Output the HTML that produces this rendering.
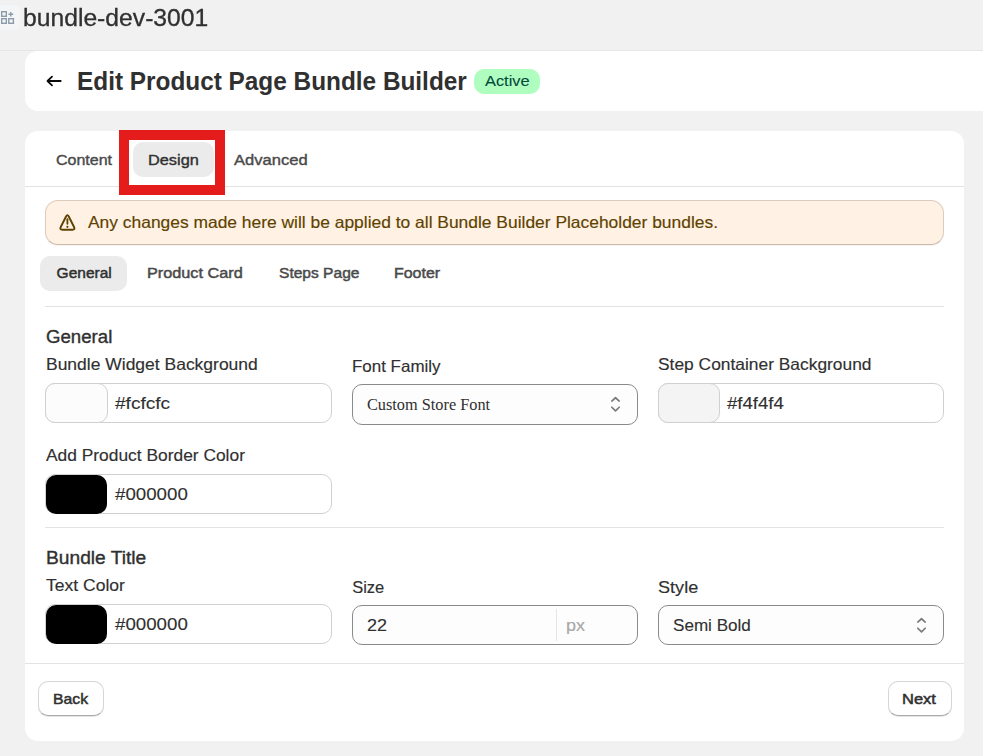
<!DOCTYPE html>
<html><head><meta charset="utf-8"><style>
html,body{margin:0;padding:0;}
body{width:983px;height:756px;overflow:hidden;background:#f1f1f1;position:relative;font-family:"Liberation Sans",sans-serif;}
.t{position:absolute;white-space:nowrap;transform-origin:0 0;}
.b{position:absolute;box-sizing:border-box;}
</style></head><body>
<div class="b" style="left:0;top:50px;width:983px;height:1px;background:#e6e6e6"></div>
<div class="b" style="left:-4px;top:5px;width:24px;height:25px;border-radius:5px;background:#f4f5f6"></div>
<svg class="b" style="left:0;top:10px" width="16" height="16" viewBox="0 0 16 16">
 <g fill="none" stroke="#8c9baa" stroke-width="1.4">
  <rect x="1.7" y="1.7" width="4.6" height="4.6"/>
  <rect x="1.7" y="8.7" width="4.6" height="4.6"/>
  <rect x="8.8" y="8.7" width="4.6" height="4.6"/>
  <path d="M8.4 4.2H13.2M10.8 1.9V6.6"/>
 </g>
</svg>
<!-- header card -->
<div class="b" style="left:25px;top:51px;width:980px;height:60px;border-radius:13px;background:#fff"></div>
<svg class="b" style="left:45px;top:74px" width="18" height="14" viewBox="0 0 18 14">
 <path d="M15.7 7H2.8M7 2.7L2.5 7L7 11.3" fill="none" stroke="#0a0a0a" stroke-width="1.8" stroke-linecap="round" stroke-linejoin="round"/>
</svg>
<div class="b" style="left:474px;top:69px;width:66px;height:25px;border-radius:10px;background:#affebf"></div>
<!-- content card -->
<div class="b" style="left:25px;top:131px;width:939px;height:610px;border-radius:13px;background:#fff"></div>
<div class="b" style="left:25px;top:186px;width:939px;height:1px;background:#e3e3e3"></div>
<div class="b" style="left:133px;top:142px;width:81px;height:35px;border-radius:10px;background:#ebebeb"></div>
<div class="b" style="left:119px;top:130px;width:106px;height:65px;border:10px solid #e41c1c"></div>
<!-- banner -->
<div class="b" style="left:45px;top:200px;width:899px;height:45px;border-radius:13px;background:#fff1e3;border:1px solid #ddccbd;border-bottom-color:#cdb9a7;box-shadow:0 1px 1px rgba(0,0,0,0.05)"></div>
<svg class="b" style="left:55px;top:210px" width="26" height="25" viewBox="0 0 26 25">
 <path d="M11.05 6.48L5.75 17.02Q4.4 19.7 7.4 19.7L17.4 19.7Q20.4 19.7 19.05 17.02L13.75 6.48Q12.4 3.8 11.05 6.48Z" fill="none" stroke="#5e4200" stroke-width="1.9" stroke-linejoin="round"/>
 <path d="M12.4 9.2V13.8" stroke="#5e4200" stroke-width="1.8" stroke-linecap="round"/>
 <circle cx="12.4" cy="16.8" r="1.1" fill="#5e4200"/>
</svg>
<div class="b" style="left:40px;top:256px;width:87px;height:35px;border-radius:10px;background:#ebebeb"></div>
<div class="b" style="left:45px;top:306px;width:899px;height:1px;background:#e3e3e3"></div>
<!-- inputs row 1 -->
<div class="b" style="left:45px;top:383px;width:287px;height:40px;border-radius:10px;border:1px solid #d0d0d0;background:#fff"></div>
<div class="b" style="left:45px;top:383px;width:63px;height:40px;border-radius:10px;border:1px solid #d0d0d0;background:#fcfcfc"></div>
<div class="b" style="left:352px;top:384px;width:286px;height:41px;border-radius:10px;border:1px solid #8a8a8a;background:#fdfdfd"></div>
<svg class="b" style="left:608px;top:394px" width="15" height="19" viewBox="0 0 15 19">
 <path d="M3.8 7.05L7.5 3.75L11.2 7.05M3.8 13.25L7.5 16.85L11.2 13.25" fill="none" stroke="#7a7a7a" stroke-width="1.7" stroke-linecap="round" stroke-linejoin="round"/>
</svg>
<div class="b" style="left:658px;top:383px;width:286px;height:40px;border-radius:10px;border:1px solid #d0d0d0;background:#fff"></div>
<div class="b" style="left:658px;top:383px;width:62px;height:40px;border-radius:10px;border:1px solid #d0d0d0;background:#f4f4f4"></div>
<!-- row 2 -->
<div class="b" style="left:45px;top:474px;width:287px;height:40px;border-radius:10px;border:1px solid #d0d0d0;background:#fff"></div>
<div class="b" style="left:45.7px;top:474.5px;width:61.5px;height:39px;border-radius:10px;background:#000"></div>
<div class="b" style="left:45px;top:527px;width:899px;height:1px;background:#e3e3e3"></div>
<!-- row 3 -->
<div class="b" style="left:45px;top:604px;width:287px;height:40px;border-radius:10px;border:1px solid #d0d0d0;background:#fff"></div>
<div class="b" style="left:45.7px;top:604.5px;width:61.5px;height:39px;border-radius:10px;background:#000"></div>
<div class="b" style="left:352px;top:605px;width:286px;height:40px;border-radius:10px;border:1px solid #8a8a8a;background:#fdfdfd"></div>
<div class="b" style="left:556px;top:609px;width:1px;height:32px;background:#e6e6e6"></div>
<div class="b" style="left:658px;top:605px;width:286px;height:40px;border-radius:10px;border:1px solid #8a8a8a;background:#fdfdfd"></div>
<svg class="b" style="left:914px;top:615px" width="15" height="19" viewBox="0 0 15 19">
 <path d="M3.8 7.05L7.5 3.75L11.2 7.05M3.8 13.25L7.5 16.85L11.2 13.25" fill="none" stroke="#7a7a7a" stroke-width="1.7" stroke-linecap="round" stroke-linejoin="round"/>
</svg>
<!-- footer -->
<div class="b" style="left:25px;top:663px;width:939px;height:1px;background:#e3e3e3"></div>
<div class="b" style="left:38px;top:681px;width:66px;height:35px;border-radius:10px;border:1px solid #d6d6d6;border-bottom-color:#a9a9a9;box-shadow:0 1px 0 rgba(0,0,0,0.1);background:#fff"></div>
<div class="b" style="left:888px;top:681px;width:63.5px;height:35px;border-radius:10px;border:1px solid #d6d6d6;border-bottom-color:#a9a9a9;box-shadow:0 1px 0 rgba(0,0,0,0.1);background:#fff"></div>
<div class="t" style="left:23.23px;top:7.00px;font-family:'Liberation Sans', sans-serif;font-size:23px;line-height:23px;font-weight:400;-webkit-text-stroke:0.3px #303030;color:#303030;transform:scaleX(1.0731);will-change:transform">bundle-dev-3001</div>
<div class="t" style="left:76.55px;top:69.00px;font-family:'Liberation Sans', sans-serif;font-size:25px;line-height:25px;font-weight:700;color:#303030;transform:scaleX(0.9744)">Edit Product Page Bundle Builder</div>
<div class="t" style="left:485.00px;top:74.00px;font-family:'Liberation Sans', sans-serif;font-size:14.8px;line-height:14.8px;font-weight:400;-webkit-text-stroke:0.1px #034a3c;color:#034a3c;transform:scaleX(1.1075)">Active</div>
<div class="t" style="left:56.30px;top:152.00px;font-family:'Liberation Sans', sans-serif;font-size:15.2px;line-height:15.2px;font-weight:400;-webkit-text-stroke:0.4px #4a4a4a;color:#4a4a4a;transform:scaleX(1.0537)">Content</div>
<div class="t" style="left:148.13px;top:152.00px;font-family:'Liberation Sans', sans-serif;font-size:15.2px;line-height:15.2px;font-weight:400;-webkit-text-stroke:0.4px #303030;color:#303030;transform:scaleX(1.0739)">Design</div>
<div class="t" style="left:234.20px;top:152.00px;font-family:'Liberation Sans', sans-serif;font-size:15.2px;line-height:15.2px;font-weight:400;-webkit-text-stroke:0.4px #4a4a4a;color:#4a4a4a;transform:scaleX(1.0896)">Advanced</div>
<div class="t" style="left:88.20px;top:214.00px;font-family:'Liberation Sans', sans-serif;font-size:16.5px;line-height:16.5px;font-weight:400;-webkit-text-stroke:0.15px #5e4200;color:#5e4200;transform:scaleX(1.0550)">Any changes made here will be applied to all Bundle Builder Placeholder bundles.</div>
<div class="t" style="left:56.60px;top:265.00px;font-family:'Liberation Sans', sans-serif;font-size:15.5px;line-height:15.5px;font-weight:400;-webkit-text-stroke:0.5px #303030;color:#303030;transform:scaleX(1.0000)">General</div>
<div class="t" style="left:147.25px;top:265.00px;font-family:'Liberation Sans', sans-serif;font-size:15.5px;line-height:15.5px;font-weight:400;-webkit-text-stroke:0.5px #4a4a4a;color:#4a4a4a;transform:scaleX(1.0478)">Product Card</div>
<div class="t" style="left:278.50px;top:265.00px;font-family:'Liberation Sans', sans-serif;font-size:15.5px;line-height:15.5px;font-weight:400;-webkit-text-stroke:0.5px #4a4a4a;color:#4a4a4a;transform:scaleX(1.0038)">Steps Page</div>
<div class="t" style="left:394.17px;top:265.00px;font-family:'Liberation Sans', sans-serif;font-size:15.5px;line-height:15.5px;font-weight:400;-webkit-text-stroke:0.5px #4a4a4a;color:#4a4a4a;transform:scaleX(1.0295)">Footer</div>
<div class="t" style="left:45.84px;top:329.00px;font-family:'Liberation Sans', sans-serif;font-size:17.5px;line-height:17.5px;font-weight:400;-webkit-text-stroke:0.35px #303030;color:#303030;transform:scaleX(1.0650)">General</div>
<div class="t" style="left:45.64px;top:356.00px;font-family:'Liberation Sans', sans-serif;font-size:16.5px;line-height:16.5px;font-weight:400;-webkit-text-stroke:0.15px #303030;color:#303030;transform:scaleX(1.0591)">Bundle Widget Background</div>
<div class="t" style="left:351.67px;top:358.00px;font-family:'Liberation Sans', sans-serif;font-size:16.5px;line-height:16.5px;font-weight:400;-webkit-text-stroke:0.15px #303030;color:#303030;transform:scaleX(1.0271)">Font Family</div>
<div class="t" style="left:658.45px;top:356.00px;font-family:'Liberation Sans', sans-serif;font-size:16.5px;line-height:16.5px;font-weight:400;-webkit-text-stroke:0.15px #303030;color:#303030;transform:scaleX(1.0532)">Step Container Background</div>
<div class="t" style="left:114.80px;top:396.00px;font-family:'Liberation Sans', sans-serif;font-size:16px;line-height:16px;font-weight:400;-webkit-text-stroke:0.1px #303030;color:#303030;transform:scaleX(1.1913)">#fcfcfc</div>
<div class="t" style="left:367.21px;top:397.00px;font-family:'Liberation Serif', serif;font-size:16.5px;line-height:16.5px;font-weight:400;color:#303030;transform:scaleX(0.9870)">Custom Store Font</div>
<div class="t" style="left:727.40px;top:396.00px;font-family:'Liberation Sans', sans-serif;font-size:16px;line-height:16px;font-weight:400;-webkit-text-stroke:0.1px #303030;color:#303030;transform:scaleX(1.1612)">#f4f4f4</div>
<div class="t" style="left:46.00px;top:447.00px;font-family:'Liberation Sans', sans-serif;font-size:16.5px;line-height:16.5px;font-weight:400;-webkit-text-stroke:0.15px #303030;color:#303030;transform:scaleX(1.0529)">Add Product Border Color</div>
<div class="t" style="left:114.70px;top:487.00px;font-family:'Liberation Sans', sans-serif;font-size:16px;line-height:16px;font-weight:400;-webkit-text-stroke:0.1px #303030;color:#303030;transform:scaleX(1.1694)">#000000</div>
<div class="t" style="left:45.70px;top:550.00px;font-family:'Liberation Sans', sans-serif;font-size:17.5px;line-height:17.5px;font-weight:400;-webkit-text-stroke:0.35px #303030;color:#303030;transform:scaleX(1.0967)">Bundle Title</div>
<div class="t" style="left:46.00px;top:577.00px;font-family:'Liberation Sans', sans-serif;font-size:16.5px;line-height:16.5px;font-weight:400;-webkit-text-stroke:0.15px #303030;color:#303030;transform:scaleX(1.0622)">Text Color</div>
<div class="t" style="left:114.70px;top:617.00px;font-family:'Liberation Sans', sans-serif;font-size:16px;line-height:16px;font-weight:400;-webkit-text-stroke:0.1px #303030;color:#303030;transform:scaleX(1.1694)">#000000</div>
<div class="t" style="left:352.20px;top:579.00px;font-family:'Liberation Sans', sans-serif;font-size:16.5px;line-height:16.5px;font-weight:400;-webkit-text-stroke:0.15px #303030;color:#303030;transform:scaleX(1.0000)">Size</div>
<div class="t" style="left:366.88px;top:618.00px;font-family:'Liberation Sans', sans-serif;font-size:16px;line-height:16px;font-weight:400;-webkit-text-stroke:0.1px #303030;color:#303030;transform:scaleX(1.1250)">22</div>
<div class="t" style="left:565.88px;top:618.00px;font-family:'Liberation Sans', sans-serif;font-size:16px;line-height:16px;font-weight:400;-webkit-text-stroke:0.15px #a8a8a8;color:#a8a8a8;transform:scaleX(1.1250)">px</div>
<div class="t" style="left:658.10px;top:579.00px;font-family:'Liberation Sans', sans-serif;font-size:16.5px;line-height:16.5px;font-weight:400;-webkit-text-stroke:0.15px #303030;color:#303030;transform:scaleX(1.0971)">Style</div>
<div class="t" style="left:672.63px;top:618.00px;font-family:'Liberation Sans', sans-serif;font-size:16px;line-height:16px;font-weight:400;-webkit-text-stroke:0.1px #303030;color:#303030;transform:scaleX(1.0676)">Semi Bold</div>
<div class="t" style="left:52.65px;top:691.00px;font-family:'Liberation Sans', sans-serif;font-size:15px;line-height:15px;font-weight:400;-webkit-text-stroke:0.5px #303030;color:#303030;transform:scaleX(1.0515)">Back</div>
<div class="t" style="left:902.20px;top:691.00px;font-family:'Liberation Sans', sans-serif;font-size:15px;line-height:15px;font-weight:400;-webkit-text-stroke:0.5px #303030;color:#303030;transform:scaleX(1.1000)">Next</div>
</body></html>
